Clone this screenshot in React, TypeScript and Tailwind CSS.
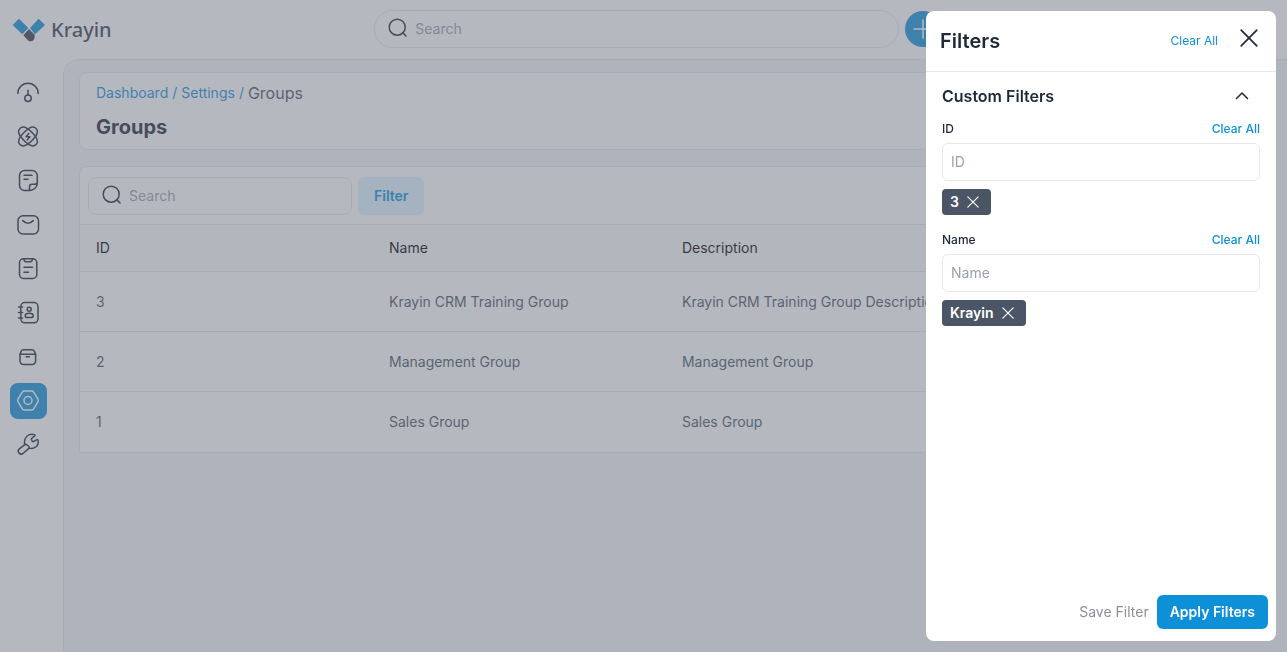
import type { ReactNode } from "react";

function Icon({
  children,
  className = "size-6",
  strokeWidth = 1.5,
}: {
  children: ReactNode;
  className?: string;
  strokeWidth?: number;
}) {
  return (
    <svg
      viewBox="0 0 24 24"
      className={className}
      fill="none"
      stroke="currentColor"
      strokeWidth={strokeWidth}
      strokeLinecap="round"
      strokeLinejoin="round"
      aria-hidden="true"
    >
      {children}
    </svg>
  );
}

const SearchIcon = () => (
  <Icon className="size-6 shrink-0">
    <circle cx="12.2" cy="10.2" r="8" />
    <path d="M17.900 15.900 21 19" />
  </Icon>
);

const CrossIcon = ({ className }: { className: string }) => (
  <Icon className={className} strokeWidth={1.7}>
    <path d="M4.200 4.200 19.800 19.800M19.800 4.200 4.200 19.800" />
  </Icon>
);

const orbit = "M-11.400 0C-11.400-4.400-6-5.700 0-5.700S11.400-4.400 11.400 0 6 5.700 0 5.700-11.400 4.400-11.400 0Z";

const navItems: { label: string; active?: boolean; icon: ReactNode }[] = [
  {
    label: "Dashboard",
    icon: (
      <>
        <path d="M1.800 12.500a10.200 10.200 0 0 1 20.400 0" />
        <path d="M12 9.200v4.800" />
        <circle cx="12" cy="17.300" r="3.200" />
      </>
    ),
  },
  {
    label: "Leads",
    icon: (
      <>
        <path d={orbit} transform="translate(12 11.500) rotate(45)" />
        <path d={orbit} transform="translate(12 11.500) rotate(-45)" />
        <path d="m12.800 8.500-2.700 3.200h3.800l-2.700 3.200" />
      </>
    ),
  },
  {
    label: "Quotes",
    icon: (
      <>
        <path d="M13.500 21.500h-5a5 5 0 0 1-5-5v-10a5 5 0 0 1 5-5h7.500a5.300 5.300 0 0 1 5.300 5.300V14c0 4-3.500 7.500-7.800 7.500Z" />
        <path d="M13.500 21.300v-3.500a2.500 2.500 0 0 1 2.500-2.500h2.500c1.500 0 2.500-.4 2.700-1.300" />
        <path d="M8 6.300h8M8 10.300h4" />
      </>
    ),
  },
  {
    label: "Mail",
    icon: (
      <>
        <rect x="2" y="2.700" width="20.500" height="18.300" rx="5" />
        <path d="M6.700 7.600c3.600 3.600 7 3.600 10.600 0" />
      </>
    ),
  },
  {
    label: "Activities",
    icon: (
      <>
        <rect x="3.500" y="1.800" width="17.300" height="19.700" rx="4" />
        <path d="M8 2c0 1.700.6 2.700 2 2.700h4.300c1.400 0 2-1 2-2.700" />
        <path d="M8 10.300h8.500M8 15.300h4.500" />
      </>
    ),
  },
  {
    label: "Contacts",
    icon: (
      <>
        <rect x="4.800" y="1.500" width="17.200" height="20.300" rx="4" />
        <path d="M2.500 6h4M2.500 11.500h4M2.500 17h4" />
        <circle cx="13.200" cy="8.300" r="2" />
        <path d="M9.200 14.700c0-1.500 1.700-2.400 4-2.400s4 .9 4 2.400-1 1.800-2.200 1.800h-3.600c-1.200 0-2.200-.3-2.200-1.800Z" />
      </>
    ),
  },
  {
    label: "Products",
    icon: (
      <>
        <path d="M4 9.200h15.600v6.800a3.500 3.500 0 0 1-3.500 3.500H7.500A3.500 3.500 0 0 1 4 16Z" />
        <path d="M4 9.200 5 6.600a3 3 0 0 1 2.700-1.800h8.200a3 3 0 0 1 2.700 1.800l1 2.600" />
        <path d="M10.200 11.800h3.200" />
      </>
    ),
  },
  {
    label: "Settings",
    active: true,
    icon: (
      <>
        <path d="M8.200 2h7.600c.9 0 1.500.4 1.900 1.100l4.300 7.100c.5.800.5 1.700 0 2.500l-4.300 7.100c-.4.700-1 1.100-1.900 1.100H8.200c-.9 0-1.500-.4-1.900-1.100L2 12.700c-.5-.8-.5-1.700 0-2.500l4.300-7.100C6.700 2.400 7.300 2 8.200 2Z" />
        <circle cx="12" cy="11.500" r="4" />
      </>
    ),
  },
  {
    label: "Configuration",
    icon: (
      <>
        <path d="M8.800 11.600C7.700 7.400 9.600 3.300 12.800 1.900c2-.9 4.200-.8 5.700-.3.600.2.700.8.300 1.200L15.900 5.200c-.5.400-.5 1-.3 1.600l.5 1.300c.2.500.8.700 1.400.5l3.400-1.900c.5-.3 1.100 0 1.200.6.400 2.300-.1 4.400-1.500 6-1.900 2-4.600 2.600-7.400 1.800" />
        <path d="m8.800 11.600-5.700 4.500a2.900 2.900 0 0 0 4.100 4.100l6-5.100c.7-1-3.200-4.700-4.400-3.500Z" />
      </>
    ),
  },
];

const rows = [
  { id: 3, name: "Krayin CRM Training Group", description: "Krayin CRM Training Group Description" },
  { id: 2, name: "Management Group", description: "Management Group" },
  { id: 1, name: "Sales Group", description: "Sales Group" },
];

function Logo() {
  return (
    <a href="#" className="flex items-center gap-[5px] pt-0.5 text-gray-700">
      <svg viewBox="0 0 102 72" className="h-6 w-[34px]" aria-hidden="true">
        <path fill="#0e90d9" d="M21 2 49 30 31 49 2 21ZM80 2 99 21 69 49 54 30Z" />
        <path fill="#374151" d="M51 33 68 50c1 2 0 12-3 16-4 4-12 5-16 2L34 52Z" />
      </svg>
      <span className="font-['Noto_Sans',sans-serif] text-xl leading-6 font-medium">Krayin</span>
    </a>
  );
}

function Header() {
  return (
    <header className="flex h-[59px] items-center justify-between bg-white px-3 pb-0.5">
      <Logo />
      <div className="flex items-center gap-1.5">
        <label className="flex h-[38px] w-[525px] items-center gap-1.5 rounded-full border border-gray-200 px-2.5 text-gray-800">
          <SearchIcon />
          <input
            type="text"
            aria-label="Search everything"
            placeholder="Search"
            className="min-w-0 flex-1 bg-transparent text-sm outline-none placeholder:text-gray-400"
          />
        </label>
        <button type="button" aria-label="Create" className="flex size-9 items-center justify-center rounded-full bg-[#0e90d9] text-white">
          <Icon>
            <path d="M12 3v18M3 12h18" />
          </Icon>
        </button>
      </div>
      <div className="flex w-[71px] justify-end">
        <button type="button" aria-label="Profile" className="size-9 rounded-full bg-pink-400" />
      </div>
    </header>
  );
}

function Sidebar() {
  return (
    <nav className="flex w-[63px] shrink-0 flex-col gap-2 bg-white px-2.5 pt-4">
      {navItems.map((item) => (
        <a
          key={item.label}
          href="#"
          aria-label={item.label}
          className={
            item.active
              ? "flex h-9 w-[37px] items-center rounded-lg bg-[#0e90d9] pl-1.5 text-white"
              : "flex h-9 w-[37px] items-center rounded-lg pl-1.5 text-gray-800"
          }
        >
          <Icon>{item.icon}</Icon>
        </a>
      ))}
    </nav>
  );
}

function GroupsPage() {
  return (
    <main className="flex min-w-0 flex-1 flex-col gap-4 rounded-tl-2xl border-t border-l border-gray-200 bg-gray-100 px-[15px] pt-3">
      <section className="flex flex-col gap-2 rounded-lg border border-gray-200 bg-white px-4 py-2">
        <nav aria-label="Breadcrumb" className="flex h-6 items-center gap-1 text-sm text-[#0e90d9]">
          <a href="#">Dashboard</a>
          <span>/</span>
          <a href="#">Settings</a>
          <span>/</span>
          <span className="text-base text-gray-600">Groups</span>
        </nav>
        <h1 className="text-xl leading-7 font-bold text-gray-800">Groups</h1>
      </section>

      <section className="overflow-hidden rounded-t-lg border border-gray-200 bg-white">
        <div className="flex items-center gap-1.5 px-2 pt-2.5 pb-[9px]">
          <label className="flex h-[38px] w-[264px] items-center gap-1.5 rounded-lg border border-gray-200 px-2.5 text-gray-800">
            <SearchIcon />
            <input
              type="text"
              aria-label="Search groups"
              placeholder="Search"
              className="min-w-0 flex-1 bg-transparent text-sm outline-none placeholder:text-gray-400"
            />
          </label>
          <button type="button" className="h-[38px] rounded-md bg-sky-100 px-4 text-sm font-semibold text-[#0e90d9]">
            Filter
          </button>
        </div>
        <table className="w-full table-fixed text-left text-sm">
          <thead>
            <tr className="h-[47px] border-y border-gray-200 bg-gray-50 text-black">
              <th className="w-[24.6%] px-4 font-normal">ID</th>
              <th className="w-[24.6%] px-4 font-normal">Name</th>
              <th className="w-[24.6%] px-4 font-normal">Description</th>
              <td />
            </tr>
          </thead>
          <tbody>
            {rows.map((row) => (
              <tr key={row.id} className="h-[60px] border-b border-gray-200 text-gray-600 last:border-b-0">
                <td className="px-4">{row.id}</td>
                <td className="px-4">{row.name}</td>
                <td className="px-4 whitespace-nowrap">{row.description}</td>
                <td />
              </tr>
            ))}
          </tbody>
        </table>
      </section>
    </main>
  );
}

function FilterField({ label, value }: { label: string; value: string }) {
  const id = `filter-${label.toLowerCase()}`;
  return (
    <div className="flex flex-col gap-2">
      <div className="-mb-0.5 flex h-4 items-center justify-between text-xs font-medium">
        <label htmlFor={id} className="text-gray-800">
          {label}
        </label>
        <button type="button" className="text-[#0e90d9]">
          Clear All
        </button>
      </div>
      <input
        id={id}
        type="text"
        placeholder={label}
        className="h-[38px] w-full rounded-md border border-gray-200 px-2 pb-0.5 text-sm outline-none placeholder:text-gray-400"
      />
      <span className="flex h-[26px] items-center gap-1.5 self-start rounded-sm bg-gray-600 pr-2.5 pl-2 text-sm font-semibold text-white">
        {value}
        <button type="button" aria-label={`Remove ${value}`}>
          <CrossIcon className="size-4" />
        </button>
      </span>
    </div>
  );
}

function FilterDrawer() {
  return (
    <aside
      role="dialog"
      aria-labelledby="filters-title"
      className="fixed inset-y-[11px] right-[11px] flex w-[350px] flex-col overflow-hidden rounded-lg bg-white"
    >
      <div className="flex h-[61px] shrink-0 items-center border-b border-gray-200 pr-[15px] pl-3.5">
        <h2 id="filters-title" className="flex-1 text-xl font-semibold text-gray-800">
          Filters
        </h2>
        <button type="button" className="text-xs text-[#0e90d9]">
          Clear All
        </button>
        <button type="button" aria-label="Close filters" className="mb-1.5 ml-[19px] text-gray-800">
          <CrossIcon className="size-6" />
        </button>
      </div>
      <div className="flex flex-1 flex-col px-4 pt-2">
        <button type="button" className="flex h-8 items-center justify-between pr-1.5 text-base font-semibold text-gray-800">
          Custom Filters
          <Icon>
            <path d="m6.500 14.500 5.500-5.500 5.500 5.500" />
          </Icon>
        </button>
        <div className="flex flex-col gap-[17px] pt-[9px]">
          <FilterField label="ID" value="3" />
          <FilterField label="Name" value="Krayin" />
        </div>
      </div>
      <div className="flex items-center justify-end gap-2 px-2 pb-3">
        <button type="button" className="text-sm text-[#8b8f97]">
          Save Filter
        </button>
        <button type="button" className="h-[34px] rounded-md bg-[#0e90d9] px-[13px] text-sm font-semibold text-white">
          Apply Filters
        </button>
      </div>
    </aside>
  );
}

export default function App() {
  return (
    <div className="flex min-h-screen flex-col bg-white font-[Inter,sans-serif]">
      <Header />
      <div className="flex flex-1">
        <Sidebar />
        <GroupsPage />
      </div>
      <div className="fixed inset-0 bg-[#6b7280]/50" />
      <FilterDrawer />
    </div>
  );
}
